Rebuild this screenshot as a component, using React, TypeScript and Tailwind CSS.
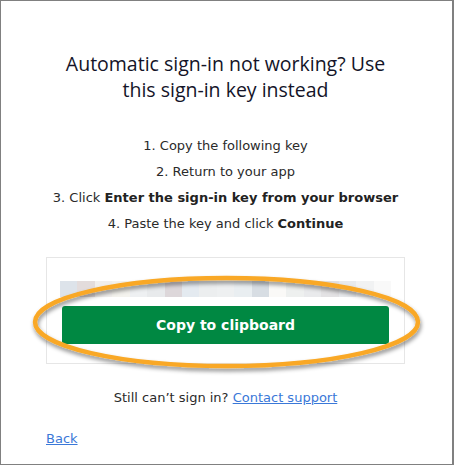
import React from "react";

const blocks = [
  "#dde3ea", "#e3dcdc", "#f1efed", "#f4f3ee", "#eef0f2", "#e8eaec", "#ddd7da",
  "#e4eaf0", "#eceeef", "#eef0f1", "#e9eef1", "#d7dde3", "#faf9f7", "#eef0ef",
  "#e9eaec", "#e3e2e4", "#e8eaed", "#f1f2f3", "#f9f9f9",
];

export default function App() {
  return (
    <div className="relative w-[454px] h-[467px] bg-white">
      <div className="relative w-[454px] h-[465px] border border-[#808080] border-r-2 bg-white">
        <div className="flex flex-col pl-[45px] pr-[47px] pt-[50px]">
          <h1
            className="text-center text-[19.5px] leading-[26px] text-[#141428] -mx-4 font-medium"
            style={{ fontFamily: '"Open Sans", "Noto Sans", sans-serif' }}
          >
            Automatic sign-in not working? Use
            <br />
            this sign-in key instead
          </h1>
          <ol
            className="mt-[30px] flex flex-col text-center text-[13px] leading-[26px] text-[#2a2a2a]"
            style={{ fontFamily: '"DejaVu Sans", Verdana, sans-serif' }}
          >
            <li>1. Copy the following key</li>
            <li>2. Return to your app</li>
            <li className="-mx-4 whitespace-nowrap">
              3. Click <b className="font-bold text-[#222]">Enter the sign-in key from your browser</b>
            </li>
            <li>
              4. Paste the key and click <b className="font-bold text-[#222]">Continue</b>
            </li>
          </ol>
          <div className="mt-[20px] border border-[#e6e6e6] pt-[23px] pb-[19px] px-[15px]">
            <div className="flex h-[16px] -mx-[2px]">
              {blocks.map((c, i) => (
                <div key={i} className="flex-1 h-full" style={{ background: c }} />
              ))}
            </div>
            <button
              className="mt-[9px] w-full h-[38px] rounded-[3px] bg-[#008842] text-white text-[14px] font-bold"
              style={{ fontFamily: '"DejaVu Sans", Verdana, sans-serif' }}
            >
              Copy to clipboard
            </button>
          </div>
          <p
            className="mt-[24px] text-center text-[13px] leading-[20px] text-[#2a2a2a]"
            style={{ fontFamily: '"DejaVu Sans", Verdana, sans-serif' }}
          >
            Still can’t sign in?{" "}
            <a href="#" className="text-[#3a78d8] underline">
              Contact support
            </a>
          </p>
          <p
            className="mt-[21px] text-[13px] leading-[20px]"
            style={{ fontFamily: '"DejaVu Sans", Verdana, sans-serif' }}
          >
            <a href="#" className="text-[#3a78d8] underline">
              Back
            </a>
          </p>
        </div>
      </div>
      <svg
        className="absolute left-[24px] top-[268px] pointer-events-none"
        width="410"
        height="115"
        viewBox="0 0 410 115"
      >
        <defs>
          <filter id="sh" x="-10%" y="-20%" width="120%" height="150%">
            <feDropShadow dx="1" dy="3" stdDeviation="2" floodColor="#000" floodOpacity="0.45" />
          </filter>
        </defs>
        <ellipse
          cx="202.5"
          cy="54"
          rx="191.5"
          ry="44"
          fill="none"
          stroke="#f9a825"
          strokeWidth="4.5"
          filter="url(#sh)"
        />
      </svg>
    </div>
  );
}
